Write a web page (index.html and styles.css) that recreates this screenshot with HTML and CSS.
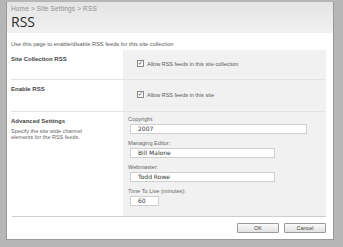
FILE: index.html
```html
<!DOCTYPE html>
<html>
<head>
<meta charset="utf-8">
<link rel="stylesheet" href="styles.css">
</head>
<body>
<div class="screen">
  <div class="window">
    <div class="header">
      <div class="crumb">Home &gt; Site Settings &gt; RSS</div>
      <div class="title">RSS</div>
    </div>
    <div class="intro">Use this page to enable/disable RSS feeds for this site collection</div>
    <div class="section s1">
      <div class="label"><div class="lt">Site Collection RSS</div></div>
      <div class="panel"><label class="check"><span class="box">✓</span>Allow RSS feeds in this site collection</label></div>
    </div>
    <div class="section s2">
      <div class="label"><div class="lt">Enable RSS</div></div>
      <div class="panel"><label class="check"><span class="box">✓</span>Allow RSS feeds in this site</label></div>
    </div>
    <div class="section s3">
      <div class="label">
        <div class="lt">Advanced Settings</div>
        <div class="desc">Specify the site wide channel elements for the RSS feeds.</div>
      </div>
      <div class="panel fields">
        <div class="fl">Copyright:</div>
        <div class="inp wide">2007</div>
        <div class="fl">Managing Editor:</div>
        <div class="inp mid">Bill Malone</div>
        <div class="fl">Webmaster:</div>
        <div class="inp mid">Todd Rowe</div>
        <div class="fl">Time To Live (minutes):</div>
        <div class="inp small">60</div>
      </div>
    </div>
    <div class="footer">
      <button class="btn">OK</button>
      <button class="btn">Cancel</button>
    </div>
  </div>
</div>
</body>
</html>
```
FILE: styles.css
```css
html, body { margin: 0; padding: 0; }
body { width: 343px; height: 247px; overflow: hidden; font-family: "Liberation Sans", Arial, sans-serif; }
.screen {
  width: 343px; height: 247px; box-sizing: border-box;
  background: #b6b6b6;
  padding: 2px 9px 7px 6px;
}
.window {
  height: 100%; box-sizing: border-box;
  background: #fff;
  border-left: 1px solid #9a9a9a;
  border-right: 1px solid #9a9a9a;
  border-bottom: 1px solid #9a9a9a;
  display: flex; flex-direction: column;
}
.header {
  height: 31px; box-sizing: border-box;
  background: linear-gradient(#e4e4e4, #f1f1f1);
  padding: 3px 0 0 4px;
}
.crumb { font-size: 6.5px; color: #8f8f8f; line-height: 8px; letter-spacing: 0.15px; }
.title { font-family: "Open Sans", sans-serif; font-size: 14px; line-height: 16px; color: #2a2a2a; margin-top: 1px; }
.intro { font-size: 5.7px; color: #5a5a5a; padding: 7px 0 0 4px; height: 10px; line-height: 8px; }
.section { display: flex; margin: 0 7px 0 4px; border-bottom: 1px solid #e2e2e2; }
.label { width: 112px; flex: none; padding-top: 5px; box-sizing: border-box; }
.lt { font-size: 6px; font-weight: bold; color: #444; line-height: 8px; }
.desc { font-size: 5.5px; color: #666; line-height: 6px; width: 84px; margin-top: 3px; }
.panel { flex: 1; background: #f1f1f1; box-sizing: border-box; padding-left: 14px; }
.s1 { height: 29px; }
.s2 { height: 31px; }
.s3 { height: 104px; border-bottom: none; }
.check { display: flex; align-items: center; font-size: 5.5px; color: #5a5a5a; margin-top: 10px; }
.s2 .check { margin-top: 11px; }
.box {
  width: 5px; height: 5px; border: 1px solid #888; background: #fff; margin-right: 3px;
  font-size: 6px; line-height: 5px; text-align: center; color: #333; overflow: hidden;
}
.fields { padding-left: 5px; padding-top: 3px; }
.fl { font-size: 5.6px; color: #666; line-height: 8px; }
.inp {
  height: 10px; box-sizing: border-box; background: #fff; border: 1px solid #cfcfcf;
  font-family: "DejaVu Sans", Verdana, sans-serif; font-size: 6px; color: #333; line-height: 8px;
  padding-left: 7px; margin: 1px 0 5px 2px;
}
.wide { width: 177px; }
.mid { width: 145px; }
.small { width: 29px; }
.footer {
  margin: 0 7px 0 5px; border-top: 1px solid #cfcfcf;
  display: flex; justify-content: flex-end; gap: 5px; padding-top: 6px;
}
.btn {
  width: 42px; height: 10px; padding: 0; border: 1px solid #9a9a9a; border-radius: 1px;
  background: linear-gradient(#fafafa, #e2e2e2);
  font-family: "Liberation Sans", Arial, sans-serif; font-size: 5.5px; color: #444; line-height: 8px;
}
```
